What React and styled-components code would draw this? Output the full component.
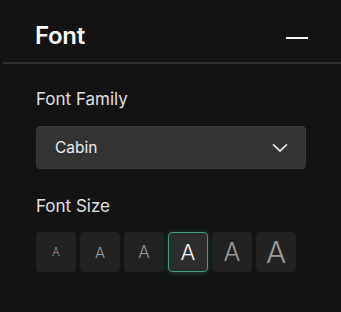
import React, { useState } from 'react';
import styled, { createGlobalStyle } from 'styled-components';

const GlobalStyle = createGlobalStyle`
  html, body {
    margin: 0;
    padding: 0;
    background: #131313;
  }
  body {
    font-family: Inter, "Noto Sans", sans-serif;
    color: #e6e6e6;
  }
`;

const Panel = styled.div`
  width: 341px;
  height: 312px;
  background: #131313;
`;

const Header = styled.div`
  display: flex;
  align-items: center;
  justify-content: space-between;
  height: 64px;
  box-sizing: border-box;
  border-bottom: 2px solid #2e2e2e;
  margin-left: 3px;
  padding: 0 33px 0 32px;
`;

const Title = styled.h2`
  margin: 0;
  font-size: 24px;
  font-weight: 600;
  color: #fafafa;
  letter-spacing: -0.3px;
  padding-top: 8px;
`;

const Collapse = styled.button`
  width: 22px;
  height: 2px;
  padding: 0;
  border: none;
  background: #f5f5f5;
  margin-top: 14px;
  cursor: pointer;
`;

const Body = styled.div`
  padding: 24px 35px 0 36px;
`;

const Label = styled.div`
  font-size: 17px;
  color: #e0e0e0;
  line-height: 22px;
  margin-bottom: ${p => p.$gap}px;
`;

const Select = styled.div`
  display: flex;
  align-items: center;
  justify-content: space-between;
  width: 270px;
  height: 43px;
  box-sizing: border-box;
  padding: 0 17px 0 18px;
  background: #333333;
  border: 1px solid #3a3a3a;
  border-radius: 4px;
  font-size: 15.5px;
  color: #ececec;
  margin-bottom: 26px;
`;

const Sizes = styled.div`
  display: flex;
  gap: 4px;
`;

const SizeButton = styled.button`
  width: 40px;
  height: 40px;
  box-sizing: border-box;
  padding: 0;
  border-radius: 4px;
  border: ${p => (p.$active ? '1.5px solid #3f9f74' : '1px solid #222')};
  background: ${p => (p.$active ? '#2d2d2d' : '#222222')};
  box-shadow: ${p => (p.$active ? '0 1px 6px rgba(63,159,116,0.35)' : 'none')};
  color: ${p => (p.$active ? '#f5f5f5' : '#9a9a9a')};
  font-family: Inter, "Noto Sans", sans-serif;
  font-size: ${p => p.$size}px;
  font-weight: 300;
  line-height: 1;
  display: flex;
  align-items: center;
  justify-content: center;
  cursor: pointer;
`;

const Chevron = () => (
  <svg width="16" height="10" viewBox="0 0 16 10" fill="none">
    <path d="M1.5 1.8 L8 8 L14.5 1.8" stroke="#d8d8d8" strokeWidth="1.8" strokeLinecap="round" strokeLinejoin="round" />
  </svg>
);

const sizes = [11, 15, 17, 22, 25, 30];

export default function App() {
  const [active, setActive] = useState(3);
  return (
    <Panel>
      <GlobalStyle />
      <Header>
        <Title>Font</Title>
        <Collapse aria-label="collapse" />
      </Header>
      <Body>
        <Label $gap={16}>Font Family</Label>
        <Select>
          <span>Cabin</span>
          <Chevron />
        </Select>
        <Label $gap={15}>Font Size</Label>
        <Sizes>
          {sizes.map((s, i) => (
            <SizeButton key={s} $size={s} $active={i === active} onClick={() => setActive(i)}>
              A
            </SizeButton>
          ))}
        </Sizes>
      </Body>
    </Panel>
  );
}
